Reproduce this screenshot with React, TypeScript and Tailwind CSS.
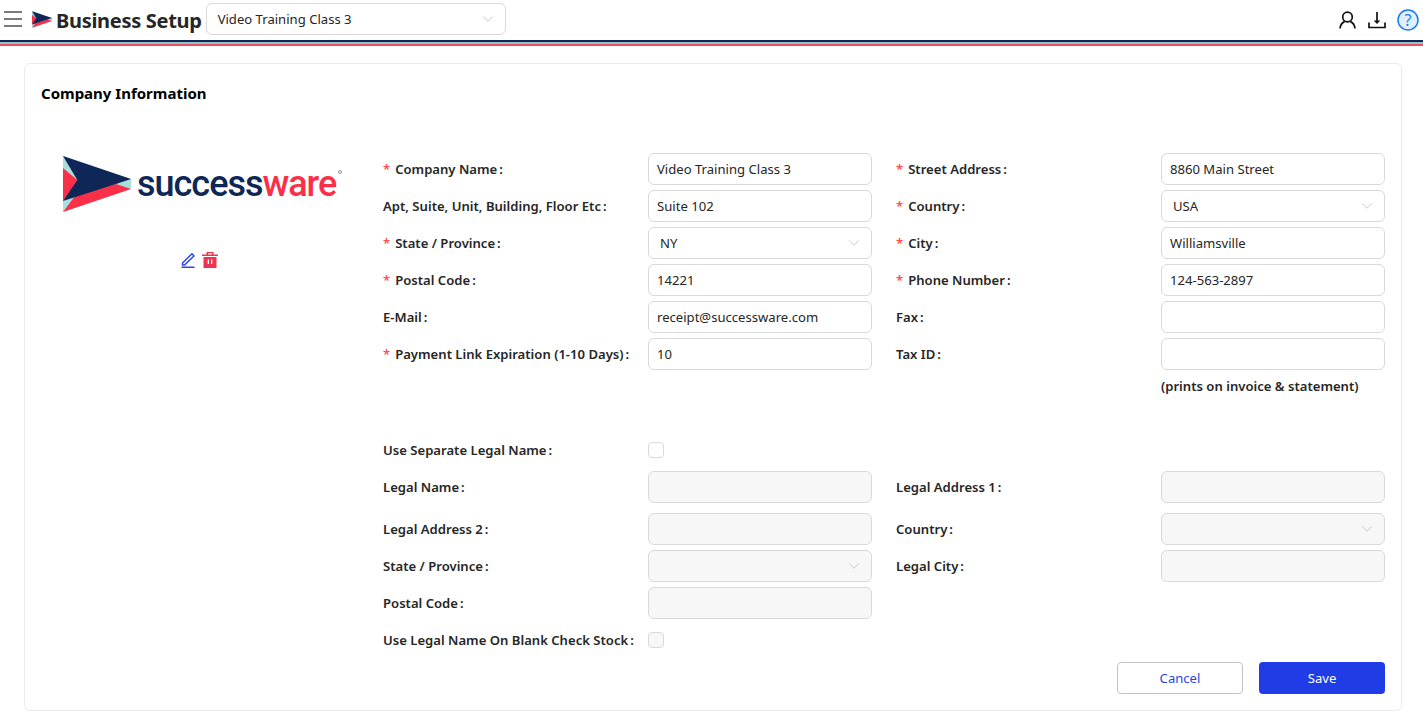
import React from "react";
import { ChevronDown } from "lucide-react";

const font = { fontFamily: '"Noto Sans", sans-serif' };

function Arrow({ className }: { className: string }) {
  return (
    <svg viewBox="0 0 68 56" className={className}>
      <polygon points="0,0 68,23 68,33 0,56" fill="#a8dfdc" />
      <polygon points="0,12 14.300,24 8,37 0,45" fill="#fb3048" />
      <polygon points="0,56 68,33 53,28 12,40" fill="#fb3048" />
      <polygon points="0,0 68,23 53,28 0,45 14.300,24" fill="#0f2756" />
    </svg>
  );
}

function Label({ text, req }: { text: string; req?: boolean }) {
  return (
    <div className="w-[265px] shrink-0 pt-[2px] text-[13.1px] font-semibold text-[#262626] whitespace-nowrap">
      {req && <span className="text-[#ff4d4f] mr-[5px]">*</span>}
      {text}
      <span className="ml-[2px] mr-1">:</span>
    </div>
  );
}

function Input({ value, disabled }: { value?: string; disabled?: boolean }) {
  return (
    <div
      className={`w-[224px] h-8 shrink-0 rounded-md border border-[#d9d9d9] px-2 pt-[2px] flex items-center text-[13.1px] text-[#262626] ${
        disabled ? "bg-[#f7f7f7]" : "bg-white"
      }`}
    >
      {value}
    </div>
  );
}

function Select({ value, disabled }: { value?: string; disabled?: boolean }) {
  return (
    <div
      className={`w-[224px] h-8 shrink-0 rounded-md border border-[#d9d9d9] pl-[11px] pr-2 flex items-center justify-between text-[13.1px] text-[#262626] ${
        disabled ? "bg-[#f7f7f7]" : "bg-white"
      }`}
    >
      <span className="mt-[2px]">{value}</span>
      <ChevronDown className="w-[18px] h-[18px] text-[#bfbfbf]" strokeWidth={1.2} />
    </div>
  );
}

function Checkbox({ disabled }: { disabled?: boolean }) {
  return (
    <div
      className={`w-4 h-4 rounded-[4px] border border-[#d9d9d9] ${disabled ? "bg-[#f7f7f7]" : "bg-white"}`}
    />
  );
}

function Row({
  children,
  className = "mb-[5px]",
}: {
  children: React.ReactNode;
  className?: string;
}) {
  return <div className={`flex items-center h-8 ${className}`}>{children}</div>;
}

const Gap = () => <div className="w-6 shrink-0" />;

export default function App() {
  return (
    <div style={font} className="w-[1423px] h-[718px] bg-white overflow-hidden">
      <header className="h-10 flex items-center">
        <svg viewBox="0 0 18 16" className="w-[18px] h-4 ml-1 mb-[2px] shrink-0" fill="none" stroke="#7a7a7a" strokeWidth="2">
          <path d="M0 1H18M0 8H18M0 15H18" />
        </svg>
        <Arrow className="w-5 h-[17px] ml-[10px] shrink-0 mb-[1px]" />
        <div className="ml-1 mt-[2px] text-[20px] font-bold text-[#262626] whitespace-nowrap tracking-[-0.3px]">Business Setup</div>
        <div className="ml-[4px] mb-[2px] w-[300px] h-8 rounded-md border border-[#d9d9d9] pl-[11px] pr-2 flex items-center justify-between text-[13.1px] text-[#262626]">
          <span className="mt-[2px]">Video Training Class 3</span>
          <ChevronDown className="w-[18px] h-[18px] text-[#bfbfbf]" strokeWidth={1.2} />
        </div>
        <div className="ml-auto mr-[4px] flex items-center gap-[11px]">
          <svg viewBox="0 0 18 18" className="w-[18px] h-[18px]" fill="none" stroke="#111" strokeWidth="1.7">
            <circle cx="8.500" cy="6" r="4.800" />
            <path d="M1 17.500c.5-4 2.500-6 4.500-6.900M16 17.500c-.5-4-2.500-6-4.500-6.900" />
          </svg>
          <svg viewBox="0 0 18 18" className="w-[18px] h-[18px]" fill="none" stroke="#111" strokeWidth="1.700">
            <path d="M9 1v9" />
            <path d="M5.700 9.500h6.600L9 13Z" fill="#111" stroke="none" />
            <path d="M1 11.500v5h16v-5" />
          </svg>
          <svg viewBox="0 0 22 22" className="w-[22px] h-[22px]">
            <circle cx="11" cy="11" r="10" fill="#e0efff" stroke="#1f7ae8" strokeWidth="1.5" />
            <text x="11" y="16.500" textAnchor="middle" fontSize="16" fill="#1f7ae8">?</text>
          </svg>
        </div>
      </header>
      <div>
        <div className="h-[2px] bg-[#0f2756]" />
        <div className="h-[2px] bg-[#8fc5c9]" />
        <div className="h-[2px] bg-[#ea4f63]" />
      </div>

      <main className="mt-[17px] ml-6 w-[1378px] h-[648px] rounded-md border border-[#ececec] bg-white">
        <h1 className="pl-4 pt-[19px] text-[15px] leading-5 font-bold text-black">Company Information</h1>
        <div className="flex mt-[50px]">
          <div className="w-[358px] shrink-0 flex flex-col items-start">
            <div className="ml-[38px] mt-[3px] flex items-center">
              <Arrow className="w-[68px] h-[56px] shrink-0" />
              <span
                style={{ fontFamily: 'Roboto, sans-serif' }}
                className="ml-[6px] text-[36px] leading-none font-medium tracking-[-1px] text-[#0f2756]"
              >
                success<span className="text-[#fb3048]">ware</span>
              </span>
              <span className="ml-[2px] mb-[24px] w-[4px] h-[4px] rounded-full border border-[#8a94a8]" />
            </div>
            <div className="ml-[155px] mt-[40px] flex items-center gap-[6px]">
              <svg viewBox="0 0 16 16" className="w-[16px] h-[16px]" fill="none" stroke="#2a46e8" strokeWidth="1.500">
                <path d="M2.500 11 2.500 13 4.500 13 14 4 12 1.800ZM1.500 15.200H14.500" />
              </svg>
              <svg viewBox="0 0 16 16" className="w-4 h-4" fill="#ee3450">
                <path d="M4.500 0h7v2.500H16V4H0V2.500h4.500Zm1.500 1.200v1.300h4V1.200Z" fillRule="evenodd" />
                <path d="M1.500 5h13v11h-13ZM5.700 7.500V12H7V7.500Zm3.300 0V12h1.300V7.500Z" fillRule="evenodd" />
              </svg>
            </div>
          </div>

          <div className="flex-1">
            <Row><Label req text="Company Name" /><Input value="Video Training Class 3" /><Gap /><Label req text="Street Address" /><Input value="8860 Main Street" /></Row>
            <Row><Label text="Apt, Suite, Unit, Building, Floor Etc" /><Input value="Suite 102" /><Gap /><Label req text="Country" /><Select value="USA" /></Row>
            <Row><Label req text="State / Province" /><Select value="NY" /><Gap /><Label req text="City" /><Input value="Williamsville" /></Row>
            <Row><Label req text="Postal Code" /><Input value="14221" /><Gap /><Label req text="Phone Number" /><Input value="124-563-2897" /></Row>
            <Row><Label text="E-Mail" /><Input value="receipt@successware.com" /><Gap /><Label text="Fax" /><Input /></Row>
            <Row className="mb-0"><Label req text="Payment Link Expiration (1-10 Days)" /><Input value="10" /><Gap /><Label text="Tax ID" /><Input /></Row>
            <div className="pl-[778px] mt-[6px] h-5 leading-5 text-[13.1px] font-semibold text-[#262626] whitespace-nowrap">(prints on invoice &amp; statement)</div>
            <Row className="mt-[38px] mb-[5px]"><Label text="Use Separate Legal Name" /><Checkbox /></Row>
            <Row className="mb-[10px]"><Label text="Legal Name" /><Input disabled /><Gap /><Label text="Legal Address 1" /><Input disabled /></Row>
            <Row><Label text="Legal Address 2" /><Input disabled /><Gap /><Label text="Country" /><Select disabled /></Row>
            <Row><Label text="State / Province" /><Select disabled /><Gap /><Label text="Legal City" /><Input disabled /></Row>
            <Row><Label text="Postal Code" /><Input disabled /></Row>
            <Row className="mb-0"><Label text="Use Legal Name On Blank Check Stock" /><Checkbox disabled /></Row>
            <div className="flex gap-4 pl-[734px] mt-[6px]">
              <button className="w-[126px] h-8 pt-[2px] rounded-[4px] border border-[#c4c4c4] bg-white text-[13.1px] text-[#2a46e8]">Cancel</button>
              <button className="w-[126px] h-8 pt-[2px] rounded-[4px] bg-[#1f3ce6] text-[13.1px] text-white">Save</button>
            </div>
          </div>
        </div>
      </main>
    </div>
  );
}
